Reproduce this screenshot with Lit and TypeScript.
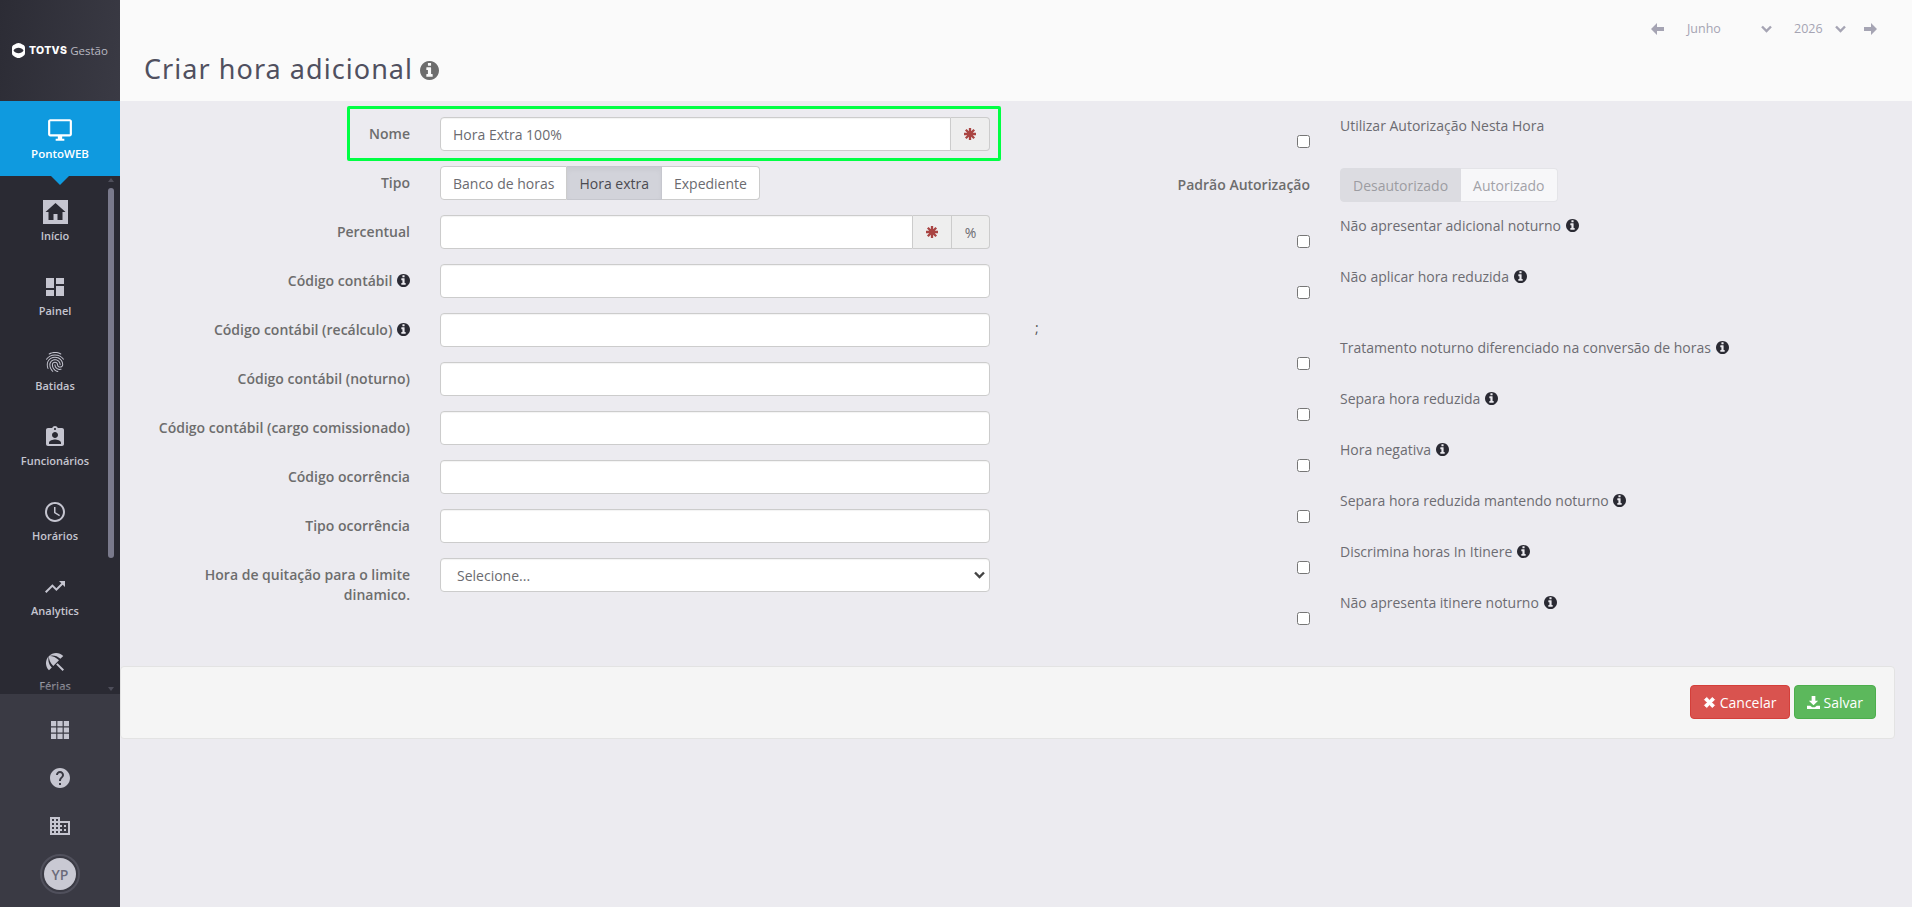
import { LitElement, html, css } from "lit";
import { customElement } from "lit/decorators.js";

const INFO = "M1152 1376v-160q0-14-9-23t-23-9h-96v-512q0-14-9-23t-23-9h-320q-14 0-23 9t-9 23v160q0 14 9 23t23 9h96v320h-96q-14 0-23 9t-9 23v160q0 14 9 23t23 9h448q14 0 23-9t9-23zm-128-896v-160q0-14-9-23t-23-9h-192q-14 0-23 9t-9 23v160q0 14 9 23t23 9h192q14 0 23-9t9-23zm640 416q0 209-103 385.5t-279.5 279.5-385.5 103-385.5-103-279.5-279.5-103-385.5 103-385.5 279.5-279.5 385.5-103 385.5 103 279.5 279.5 103 385.5z";
const info = (cls = "info") => html`<svg class=${cls} viewBox="128 128 1536 1536" fill="currentColor"><path d=${INFO}></path></svg>`;
const star = () => html`<svg class="star" viewBox="0 0 12 12" fill="none" stroke="#a94442" stroke-width="2.3"><path d="M6 0v12M0 6h12M1.800 1.800l8.400 8.400M10.200 1.800l-8.400 8.400"></path></svg>`;
const mi = (d: string, cls = "") => html`<svg class="mi ${cls}" viewBox="0 0 24 24" fill="currentColor"><path d=${d}></path></svg>`;

const P = {
  desktop: "M21 2H3c-1.1 0-2 .9-2 2v12c0 1.1.9 2 2 2h7v2H8v2h8v-2h-2v-2h7c1.1 0 2-.9 2-2V4c0-1.1-.9-2-2-2zm0 14H3V4h18v12z",
  dash: "M3 13h8V3H3v10zm0 8h8v-6H3v6zm10 0h8V11h-8v10zm0-18v6h8V3h-8z",
  finger: "M17.81 4.47c-.08 0-.16-.02-.23-.06C15.66 3.42 14 3 12.01 3c-1.98 0-3.86.47-5.58 1.41-.24.13-.54.04-.68-.2-.13-.24-.04-.55.2-.68C7.82 2.52 9.86 2 12.01 2c2.13 0 3.99.47 6.03 1.52.25.13.34.43.21.67-.09.18-.26.28-.44.28zM3.5 9.72c-.1 0-.2-.03-.29-.09-.23-.16-.28-.47-.12-.7.99-1.4 2.25-2.5 3.75-3.27C9.98 4.04 14 4.03 17.15 5.65c1.5.77 2.76 1.86 3.75 3.25.16.22.11.54-.12.7-.23.16-.54.11-.7-.12-.9-1.26-2.04-2.25-3.39-2.94-2.87-1.47-6.54-1.47-9.4.01-1.36.7-2.5 1.7-3.4 2.96-.08.14-.23.21-.39.21zm6.25 12.07c-.13 0-.26-.05-.35-.15-.87-.87-1.34-1.43-2.01-2.64-.69-1.23-1.05-2.73-1.05-4.34 0-2.97 2.54-5.39 5.66-5.39s5.66 2.42 5.66 5.39c0 .28-.22.5-.5.5s-.5-.22-.5-.5c0-2.42-2.09-4.39-4.66-4.39s-4.66 1.97-4.66 4.39c0 1.44.32 2.77.93 3.85.64 1.15 1.08 1.64 1.85 2.42.19.2.19.51 0 .71-.11.1-.24.15-.37.15zm7.17-1.85c-1.19 0-2.24-.3-3.1-.89-1.49-1.01-2.38-2.65-2.38-4.39 0-.28.22-.5.5-.5s.5.22.5.5c0 1.41.72 2.74 1.94 3.56.71.48 1.54.71 2.54.71.24 0 .64-.03 1.04-.1.27-.05.53.13.58.41.05.27-.13.53-.41.58-.57.11-1.07.12-1.21.12zM14.91 22c-.04 0-.09-.01-.13-.02-1.59-.44-2.63-1.03-3.72-2.1-1.4-1.39-2.17-3.24-2.17-5.22 0-1.62 1.38-2.94 3.08-2.94s3.08 1.32 3.08 2.94c0 1.07.93 1.94 2.08 1.94s2.08-.87 2.08-1.94c0-3.77-3.25-6.83-7.25-6.83-2.84 0-5.44 1.58-6.61 4.03-.39.81-.59 1.76-.59 2.8 0 .78.07 2.01.67 3.61.1.26-.03.55-.29.64-.26.1-.55-.04-.64-.29-.49-1.31-.73-2.61-.73-3.96 0-1.2.23-2.29.68-3.24 1.33-2.79 4.28-4.6 7.51-4.6 4.55 0 8.25 3.51 8.25 7.83 0 1.62-1.38 2.94-3.08 2.94s-3.08-1.32-3.08-2.94c0-1.07-.93-1.94-2.08-1.94s-2.08.87-2.08 1.94c0 1.71.66 3.31 1.87 4.51.95.94 1.86 1.46 3.27 1.85.27.07.42.35.35.61-.05.23-.26.38-.47.38z",
  badge: "M19 3h-4.18C14.4 1.84 13.3 1 12 1c-1.3 0-2.4.84-2.82 2H5c-1.1 0-2 .9-2 2v14c0 1.1.9 2 2 2h14c1.1 0 2-.9 2-2V5c0-1.1-.9-2-2-2zm-7 0c.55 0 1 .45 1 1s-.45 1-1 1-1-.45-1-1 .45-1 1-1zm0 4c1.66 0 3 1.34 3 3s-1.34 3-3 3-3-1.34-3-3 1.34-3 3-3zm6 12H6v-1.4c0-2 4-3.1 6-3.1s6 1.1 6 3.1V19z",
  clock: "M11.99 2C6.47 2 2 6.48 2 12s4.47 10 9.99 10C17.52 22 22 17.52 22 12S17.52 2 11.99 2zM12 20c-4.42 0-8-3.58-8-8s3.58-8 8-8 8 3.58 8 8-3.58 8-8 8zM12.5 7H11v6l5.25 3.15.75-1.23-4.5-2.67z",
  trend: "M16 6l2.29 2.29-4.88 4.88-4-4L2 16.59 3.41 18l6-6 4 4 6.3-6.29L22 12V6z",
  beach: "M13.127 14.56l1.43-1.43 6.44 6.443L19.57 21zm4.293-5.73l2.86-2.86c-3.95-3.95-10.35-3.96-14.3-.02 3.93-1.3 8.31-.25 11.44 2.88zM5.95 5.98c-3.94 3.95-3.93 10.35.02 14.3l2.86-2.86C5.7 14.29 4.65 9.91 5.95 5.98zm.02-.02l-.01.01c-.38 3.01 1.17 6.88 4.3 10.02l5.73-5.73c-3.13-3.13-7.01-4.68-10.02-4.3z",
  help: "M12 2C6.48 2 2 6.48 2 12s4.48 10 10 10 10-4.48 10-10S17.52 2 12 2zm1 17h-2v-2h2v2zm2.07-7.75l-.9.92C13.45 12.9 13 13.5 13 15h-2v-.5c0-1.1.45-2.1 1.17-2.83l1.24-1.26c.37-.36.59-.86.59-1.41 0-1.1-.9-2-2-2s-2 .9-2 2H8c0-2.21 1.79-4 4-4s4 1.79 4 4c0 .88-.36 1.68-.93 2.25z",
  domain: "M12 7V3H2v18h20V7H12zM6 19H4v-2h2v2zm0-4H4v-2h2v2zm0-4H4V9h2v2zm0-4H4V5h2v2zm4 12H8v-2h2v2zm0-4H8v-2h2v2zm0-4H8V9h2v2zm0-4H8V5h2v2zm10 12h-8v-2h2v-2h-2v-2h2v-2h-2V9h8v10zm-2-8h-2v2h2v-2zm0 4h-2v2h2v-2z",
  apps: "M3 3h5.2v5.2H3zM9.4 3h5.2v5.2H9.4zM15.8 3H21v5.2h-5.2zM3 9.4h5.2v5.2H3zM9.4 9.4h5.2v5.2H9.4zM15.8 9.4H21v5.2h-5.2zM3 15.8h5.2V21H3zM9.4 15.8h5.2V21H9.4zM15.8 15.8H21V21h-5.2z",
};

const MENU = [
  { label: "Painel", icon: P.dash },
  { label: "Batidas", icon: P.finger },
  { label: "Funcionários", icon: P.badge },
  { label: "Horários", icon: P.clock },
  { label: "Analytics", icon: P.trend },
  { label: "Férias", icon: P.beach },
];

const FIELDS: { label: string; info?: boolean }[] = [
  { label: "Código contábil", info: true },
  { label: "Código contábil (recálculo)", info: true },
  { label: "Código contábil (noturno)" },
  { label: "Código contábil (cargo comissionado)" },
  { label: "Código ocorrência" },
  { label: "Tipo ocorrência" },
];

const CHECKS = [
  "Tratamento noturno diferenciado na conversão de horas",
  "Separa hora reduzida",
  "Hora negativa",
  "Separa hora reduzida mantendo noturno",
  "Discrimina horas In Itinere",
  "Não apresenta itinere noturno",
];

@customElement("app-root")
export class AppRoot extends LitElement {
  static styles = css`
    :host { display: flex; height: 907px; overflow: hidden; background: #ecebf0; font-family: "Open Sans", sans-serif; font-size: 14px; color: #6b6b70; }
    * { box-sizing: border-box; }
    .side { width: 120px; flex: none; display: flex; flex-direction: column; height: 907px; background: #2a2a33; color: #c5c5d0; }
    .logo { height: 101px; flex: none; display: flex; align-items: center; gap: 3px; padding-left: 12px; background: linear-gradient(100deg, #2c2c35, #3a3a44); }
    .logo svg { width: 13px; height: 15px; flex: none; margin-right: 1px; }
    .brand { font: 800 10.5px "Inter", sans-serif; color: #fff; letter-spacing: .3px; }
    .gest { font: 400 11.5px "Open Sans", sans-serif; color: #b9b9c2; }
    .active { height: 75px; flex: none; position: relative; background: #0f9adf; color: #fff; display: flex; flex-direction: column; align-items: center; padding-top: 16px; font-weight: 600; font-size: 11.5px; }
    .active .mi { width: 26px; height: 26px; margin-bottom: 3px; }
    .active::after { content: ""; position: absolute; left: 51px; top: 100%; border: 9px solid transparent; border-top-color: #0f9adf; border-bottom-width: 0; z-index: 2; }
    .menu { flex: 1; min-height: 0; overflow: hidden; position: relative; }
    .menu::after { content: ""; position: absolute; left: 0; right: 0; bottom: 0; height: 18px; background: linear-gradient(transparent, rgba(42,42,51,.75)); }
    .item { width: 110px; height: 75px; display: flex; flex-direction: column; align-items: center; padding-top: 24px; font-size: 11px; font-weight: 600; }
    .ibox { height: 24px; display: flex; align-items: center; justify-content: center; margin-bottom: 4px; }
    .item span { line-height: 16px; }
    .mi { width: 24px; height: 24px; display: block; }
    .home { width: 25px; height: 24px; display: block; }
    .thumb { position: absolute; left: 108px; top: 12px; width: 6px; height: 370px; background: #7a7a8c; border-radius: 3px; }
    .sa { position: absolute; left: 108px; width: 0; border: 3px solid transparent; }
    .sa.up { top: 2px; border-bottom: 4px solid #4e4e5a; border-top-width: 0; }
    .sa.dn { bottom: 3px; border-top: 4px solid #4e4e5a; border-bottom-width: 0; z-index: 1; }
    .bottom { height: 213px; flex: none; background: #3a3a44; padding-top: 12px; display: flex; flex-direction: column; align-items: center; }
    .bi { height: 48px; display: flex; align-items: center; justify-content: center; }
    .avatar { width: 40px; height: 40px; border-radius: 50%; border: 2px solid #50505c; padding: 2px; }
    .avatar div { width: 100%; height: 100%; border-radius: 50%; background: #c9c9d3; color: #6b6b7a; display: flex; align-items: center; justify-content: center; font-size: 14px; font-weight: 600; }

    .main { flex: 1; min-width: 0; display: flex; flex-direction: column; }
    .head { height: 101px; flex: none; background: #fafafa; display: flex; justify-content: space-between; padding: 0 35px 0 24px; }
    .title { margin: 0; padding-top: 49px; font: 400 27px/40px "Noto Sans", sans-serif; color: #50505f; letter-spacing: 1.05px; display: flex; align-items: center; gap: 7px; height: 88px; }
    .title .info { width: 19px; height: 19px; color: #6d6d6d; margin-top: 3px; }
    .date { display: flex; align-items: center; height: 57px; font-size: 12.5px; color: #a5a4b3; }
    .date svg { display: block; flex: none; }
    .arrow { width: 13px; height: 12px; }
    .chev { width: 11px; height: 8px; }
    .date .m { margin-left: 23px; width: 74px; }
    .date .y { margin-left: 22px; width: 41px; }
    .date .gap { margin-left: 18px; }

    .form { display: flex; padding: 16px 0 22px; }
    .left { width: 870px; flex: none; display: flex; flex-direction: column; gap: 15px; }
    .row { display: grid; grid-template-columns: 290px 550px; column-gap: 30px; position: relative; }
    .row.hl::after { content: ""; position: absolute; left: 227px; right: -11px; top: -11px; bottom: -10px; border: 3px solid #00ff44; border-radius: 2px; pointer-events: none; }
    .lbl { text-align: right; font-weight: 600; line-height: 20px; padding: 7px 0 0 30px; color: #6d6d6d; }
    .lbl .info, .rtext .info { width: 13px; height: 13px; color: #2a2a33; display: inline-block; vertical-align: -1px; margin-left: 1px; }
    .group { display: flex; height: 34px; }
    .ctl { flex: 1; min-width: 0; height: 34px; border: 1px solid #ccc; border-radius: 4px; background: #fff; padding: 0 12px; font: 14px "Open Sans", sans-serif; color: #6b6b70; box-shadow: inset 0 1px 1px rgba(0,0,0,.05); outline: none; }
    .group .ctl { border-radius: 4px 0 0 4px; }
    .addon { width: 39px; flex: none; border: 1px solid #ccc; border-left: 0; background: #eee; display: flex; align-items: center; justify-content: center; color: #6b6b70; font-size: 14px; }
    .addon + .addon { width: 38px; }
    .addon:last-child { border-radius: 0 4px 4px 0; }
    .star { width: 12px; height: 12px; display: block; }
    .seg { display: flex; height: 34px; }
    .seg span { display: flex; align-items: center; padding: 0 12px; background: #fff; border: 1px solid #ccc; border-left-width: 0; color: #6b6b70; }
    .seg span:first-child { border-left-width: 1px; border-radius: 4px 0 0 4px; }
    .seg span:last-child { border-radius: 0 4px 4px 0; }
    .seg span.on { background: #d2d3da; color: #4a4a50; border-color: #c6c7ce; box-shadow: inset 0 3px 5px rgba(0,0,0,.04); }
    .seg.off span { border-color: #e4e4e8; background: #f7f7f9; color: #a2a2a8; }
    .seg.off span.on { background: #dcdce1; border-color: #dcdce1; color: #9c9ca2; box-shadow: none; }
    .selwrap { position: relative; }
    .selwrap select { width: 100%; appearance: none; padding-left: 16px; }
    .chevsel { position: absolute; right: 5px; top: 13px; width: 11px; height: 8px; pointer-events: none; color: #444; }

    .right { flex: 1; min-width: 0; margin-top: -1px; }
    .rrow { display: grid; grid-template-columns: 320px 1fr; column-gap: 30px; height: 51px; }
    .rrow.seg-row { height: 49px; padding-top: 1px; }
    .rrow input { justify-self: end; width: 13px; height: 13px; margin: 19px 0 0; }
    .rtext { line-height: 20px; color: #6c6c72; }
    .seg-lbl { text-align: right; font-weight: 600; line-height: 34px; color: #6d6d6d; }
    .semi { height: 20px; padding-left: 45px; line-height: 20px; color: #555; }

    .foot { margin-right: 17px; height: 73px; flex: none; background: #f5f5f5; border: 1px solid #e3e3e3; border-radius: 4px; padding: 18px 18px 0 0; display: flex; justify-content: flex-end; gap: 4px; }
    .btn { height: 34px; display: flex; align-items: center; gap: 4px; padding: 0 12px; color: #fff; border-radius: 4px; font-size: 14px; border: 1px solid; }
    .btn svg { width: 13px; height: 13px; display: block; }
    .red { background: #d9534f; border-color: #d43f3a; }
    .green { background: #5cb85c; border-color: #4cae4c; }
  `;

  render() {
    return html`
      <aside class="side">
        <div class="logo">
          <svg viewBox="0 0 13 15"><path fill="#fff" d="M6.500 0C8 0 9.500.9 11 1.800c1.400.8 2 1.500 2 3.200v5c0 1.700-.6 2.400-2 3.200C9.500 14.100 8 15 6.500 15S3.500 14.100 2 13.200C.6 12.400 0 11.700 0 10V5c0-1.700.6-2.400 2-3.200C3.500.9 5 0 6.500 0z"></path><path fill="#32323b" d="M1.500 7.500c1-1.800 3-2.800 5-2.800s4 1 5 2.800c-1 1.800-3 2.800-5 2.800s-4-1-5-2.800z"></path></svg>
          <span class="brand">TOTVS</span><span class="gest">Gestão</span>
        </div>
        <div class="active">${mi(P.desktop)}<span>PontoWEB</span></div>
        <div class="menu">
          <div class="item">
            <div class="ibox"><svg class="home" viewBox="0 0 25 24"><rect width="25" height="24" fill="#c5c5d0"></rect><path fill="#2a2a33" d="M10.500 20v-6h4v6h5v-8h3L12.500 3l-10 9h3v8z"></path></svg></div>
            <span>Início</span>
          </div>
          ${MENU.map((m) => html`<div class="item"><div class="ibox">${mi(m.icon)}</div><span>${m.label}</span></div>`)}
          <div class="sa up"></div>
          <div class="thumb"></div>
          <div class="sa dn"></div>
        </div>
        <div class="bottom">
          <div class="bi">${mi(P.apps)}</div>
          <div class="bi">${mi(P.help)}</div>
          <div class="bi">${mi(P.domain)}</div>
          <div class="bi"><div class="avatar"><div>YP</div></div></div>
        </div>
      </aside>
      <main class="main">
        <header class="head">
          <h1 class="title">Criar hora adicional ${info()}</h1>
          <div class="date">
            <svg class="arrow" viewBox="0 0 13 12" fill="currentColor"><path d="M6 0v4h7v4H6v4L0 6z"></path></svg>
            <span class="m">Junho</span>
            <svg class="chev" viewBox="0 0 11 8" fill="none" stroke="currentColor" stroke-width="2.400"><path d="M1 1.500l4.500 4.500 4.500-4.500"></path></svg>
            <span class="y">2026</span>
            <svg class="chev" viewBox="0 0 11 8" fill="none" stroke="currentColor" stroke-width="2.400"><path d="M1 1.500l4.500 4.500 4.500-4.500"></path></svg>
            <svg class="arrow gap" viewBox="0 0 13 12" fill="currentColor"><path d="M7 0v4H0v4h7v4l6-6z"></path></svg>
          </div>
        </header>
        <section class="form">
          <div class="left">
            <div class="row hl">
              <label class="lbl">Nome</label>
              <div class="group"><input class="ctl" .value=${"Hora Extra 100%"} /><div class="addon">${star()}</div></div>
            </div>
            <div class="row">
              <label class="lbl">Tipo</label>
              <div class="seg"><span>Banco de horas</span><span class="on">Hora extra</span><span>Expediente</span></div>
            </div>
            <div class="row">
              <label class="lbl">Percentual</label>
              <div class="group"><input class="ctl" /><div class="addon">${star()}</div><div class="addon">%</div></div>
            </div>
            ${FIELDS.map((f) => html`<div class="row">
              <label class="lbl">${f.label}${f.info ? html` ${info()}` : ""}</label>
              <input class="ctl" />
            </div>`)}
            <div class="row">
              <label class="lbl">Hora de quitação para o limite dinamico.</label>
              <div class="selwrap">
                <select class="ctl"><option>Selecione...</option></select>
                <svg class="chevsel" viewBox="0 0 11 8" fill="none" stroke="currentColor" stroke-width="2.400"><path d="M1 1.500l4.500 4.500 4.500-4.500"></path></svg>
              </div>
            </div>
          </div>
          <div class="right">
            <div class="rrow"><input type="checkbox" /><div class="rtext">Utilizar Autorização Nesta Hora</div></div>
            <div class="rrow seg-row">
              <div class="seg-lbl">Padrão Autorização</div>
              <div class="seg off"><span class="on">Desautorizado</span><span>Autorizado</span></div>
            </div>
            <div class="rrow"><input type="checkbox" /><div class="rtext">Não apresentar adicional noturno ${info()}</div></div>
            <div class="rrow"><input type="checkbox" /><div class="rtext">Não aplicar hora reduzida ${info()}</div></div>
            <div class="semi">;</div>
            ${CHECKS.map((c) => html`<div class="rrow"><input type="checkbox" /><div class="rtext">${c} ${info()}</div></div>`)}
          </div>
        </section>
        <footer class="foot">
          <div class="btn red"><svg viewBox="0 0 14 14" fill="#fff"><path d="M1.600 4L4 1.600 7 4.600l3-3L12.400 4l-3 3 3 3L10 12.400l-3-3-3 3L1.600 10l3-3z" stroke="#fff" stroke-width="1" stroke-linejoin="round"></path></svg>Cancelar</div>
          <div class="btn green"><svg viewBox="0 0 14 14" fill="#fff"><path d="M5 0h4v5h3L7 10 2 5h3zM0 10.500h3.500L5.500 12h3l2-1.500H14V14H0z"></path></svg>Salvar</div>
        </footer>
      </main>
    `;
  }
}
